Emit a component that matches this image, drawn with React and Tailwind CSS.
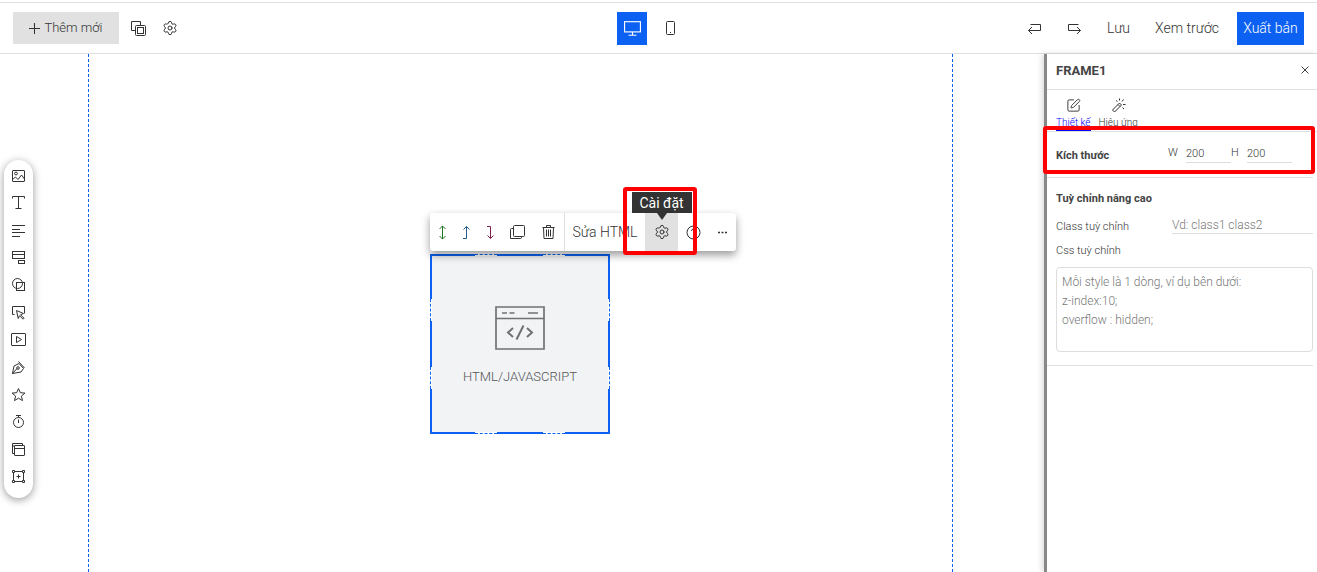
import { useState } from 'react'
import { Settings, SquarePen } from 'lucide-react'

// All thin icons share a 15px grid so the 1px strokes stay sharp
function Icon({ children, className = 'size-[15px]' }) {
  return (
    <svg viewBox="0 0 15 15" className={`${className} shrink-0 overflow-visible`} fill="none" stroke="currentColor" strokeWidth="1" aria-hidden="true">
      {children}
    </svg>
  )
}

const tools = [
  { name: 'Hình ảnh', icon: <><rect x="1.5" y="2.5" width="12" height="11" rx="0.5" /><circle cx="5" cy="5.5" r="1.4" /><path d="M1.5 11.5 4.5 9l2.500 2.500L10.500 7l3 4" /></> },
  { name: 'Văn bản', icon: <path d="M1.5 3.5v-2h12v2M7.5 1.5v12M4.5 13.5h6" /> },
  { name: 'Đoạn văn', icon: <path d="M1 2.5h13M1 6.5h8M1 9.5h13M1 13.5h8" /> },
  { name: 'Biểu mẫu', icon: <><rect x="1.5" y="1.5" width="12" height="7" /><path d="M1.5 4.5h12" /><rect x="7.5" y="10.5" width="6" height="3" /></> },
  { name: 'Hình khối', icon: <><circle cx="6.5" cy="6.5" r="5" /><rect x="5.5" y="5.5" width="8" height="8" /></> },
  { name: 'Nút bấm', icon: <><path d="M3.5 9.500h-2v-8h12v7" /><path d="m5.500 5.500 7 3-3 1.200 3.500 3.500-1 1-3.500-3.500-1.300 2.800z" /></> },
  { name: 'Video', icon: <><rect x="0.5" y="1.5" width="14" height="12" rx="0.5" /><path d="m5.500 4.500 5 3-5 3z" /></> },
  { name: 'Bút vẽ', icon: <><path d="M1.500 13.500 3 6l5-2.500L12.500 8.500 10 12z" /><path d="m7.500 1.500 6 6.500M1.500 13.500l4.500-5" /><circle cx="7" cy="8" r="1.300" /></> },
  { name: 'Biểu tượng', icon: <path d="m7.500 1.500 1.800 4.200 4.700.4-3.600 3 1.100 4.500-4-2.400-4 2.400 1.100-4.500-3.600-3 4.700-.4z" /> },
  { name: 'Đếm ngược', icon: <><circle cx="7.5" cy="8.5" r="5" /><path d="M5 1.500h5M7.500 5.500v3.500M7.500 1.500v2" /></> },
  { name: 'Popup', icon: <><path d="M3.500 11.500h-2v-10h10v2" /><rect x="3.5" y="3.5" width="10" height="10" rx="0.5" /><path d="M3.500 6.500h10M1.500 4h2" /></> },
  { name: 'Khung', icon: <><path d="M2.500 4v7M12.500 4v7M4 2.500h7M4 12.500h7M5.500 7.500h4M7.500 5.500v4" /><path d="M1.500 1.500h2v2h-2zM11.500 1.500h2v2h-2zM1.500 11.500h2v2h-2zM11.500 11.500h2v2h-2z" /></> },
]

function TopBar() {
  const [device, setDevice] = useState('desktop')

  return (
    <header className="mt-0.5 grid h-[52px] grid-cols-[1fr_auto_1fr] items-center border-y border-[#e0e0e0] px-[13px] text-sm">
      <div className="flex items-center">
        <button className="flex h-8 w-[106px] items-center justify-center gap-1 bg-[#e1e1e1] text-[13px]">
          <Icon className="size-[11px]"><path strokeWidth="1.400" d="M7.500 0v15M0 7.500h15" /></Icon>
          Thêm mới
        </button>
        <button aria-label="Nhân bản" className="ml-3">
          <Icon>
            <path d="M4.500 9.500h-4v-9h9v4" />
            <rect x="4.5" y="4.5" width="10" height="10" rx="1" />
            <rect x="6.5" y="6.5" width="6" height="6" />
          </Icon>
        </button>
        <button aria-label="Thiết lập" className="ml-4">
          <Settings className="size-4" strokeWidth={1.5} />
        </button>
      </div>

      <div className="flex items-center gap-2 pr-[15px]">
        <button
          aria-label="Máy tính"
          onClick={() => setDevice('desktop')}
          className={`flex h-[33px] w-[30px] items-center justify-center ${device === 'desktop' ? 'bg-[#0c61f2] text-white' : ''}`}
        >
          <Icon className="size-[17px]">
            <rect x="0.5" y="1.5" width="14" height="9" />
            <path d="M7.500 10.500v3M4 13.500h7" />
          </Icon>
        </button>
        <button
          aria-label="Điện thoại"
          onClick={() => setDevice('mobile')}
          className={`flex h-[33px] w-[30px] items-center justify-center ${device === 'mobile' ? 'bg-[#0c61f2] text-white' : ''}`}
        >
          <Icon>
            <rect x="3.5" y="0.5" width="8" height="13" rx="1" />
            <path d="M7 11.500h1" />
          </Icon>
        </button>
      </div>

      <div className="flex items-center justify-end">
        <button aria-label="Hoàn tác" className="mr-[25px]">
          <Icon><path d="M3.500 3.500h10v6H1.500M5 6 1.500 9.500 5 13" /></Icon>
        </button>
        <button aria-label="Làm lại" className="mr-[25px]">
          <Icon><path d="M11.500 3.500h-10v6h12M10 6l3.500 3.500L10 13" /></Icon>
        </button>
        <button className="mr-[25px]">Lưu</button>
        <button className="mr-[18px]">Xem trước</button>
        <button className="h-[33px] w-[67px] bg-[#0c61f2] text-white">Xuất bản</button>
      </div>
    </header>
  )
}

function ToolRail() {
  return (
    <nav aria-label="Công cụ" className="z-10 mt-[106px] ml-1 flex h-[338px] w-[29px] shrink-0 flex-col items-center justify-between rounded-full bg-white pt-2 pb-3.5 shadow-[0_2px_9px_rgba(0,0,0,0.4)]">
      {tools.map(tool => (
        <button key={tool.name} aria-label={tool.name}>
          <Icon>{tool.icon}</Icon>
        </button>
      ))}
    </nav>
  )
}

function WidgetToolbar() {
  const item = 'flex items-center justify-center'

  return (
    <div className="absolute -top-[43px] -left-0.5 flex h-[38px] w-[306px] rounded-[3px] bg-white text-sm text-[#333] shadow-[0_4px_9px_rgba(0,0,0,0.4)]">
      <button aria-label="Di chuyển" className={`${item} w-6 text-[#1f7a1f]`}>
        <Icon><path d="M7.500 1v13M4.500 4l3-3 3 3M4.500 11l3 3 3-3" /></Icon>
      </button>
      <button aria-label="Lên trên" className={`${item} w-6 text-[#245a8c]`}>
        <Icon><path d="M4 13.500h3.500v-12M4.500 4.500l3-3 3 3" /></Icon>
      </button>
      <button aria-label="Xuống dưới" className={`${item} w-6 text-[#7a2049]`}>
        <Icon><path d="M4 1.500h3.500v12M4.500 10.500l3 3 3-3" /></Icon>
      </button>
      <button aria-label="Sao chép" className={`${item} w-[31px]`}>
        <Icon>
          <rect x="3.5" y="0.5" width="11" height="11" rx="1" />
          <path d="M3.500 3.500h-2q-1 0-1 1v9h10q1 0 1-1v-1" />
        </Icon>
      </button>
      <button aria-label="Xoá" className={`${item} w-[31px]`}>
        <Icon>
          <path d="M1.500 2.500h12M5.500 2.500v-2h4v2M2.500 2.500l.5 11h9l.5-11M5.500 4.500v7M7.500 4.500v7M9.500 4.500v7" />
        </Icon>
      </button>
      <button className="w-[81px] border-l border-[#e0e0e0]">Sửa HTML</button>
      <div className="relative flex">
        <button aria-describedby="settings-tip" aria-label="Cài đặt phần tử" className={`${item} w-[33px] bg-[#e1e1e1]`}>
          <Settings className="size-4" strokeWidth={1.5} />
        </button>
        <div id="settings-tip" role="tooltip" className="absolute -top-[21px] left-1/2 flex h-[21px] w-[60px] -translate-x-1/2 items-center justify-center bg-[#333] font-normal text-white">
          Cài đặt
          <span className="absolute top-full border-x-[5px] border-t-[7px] border-x-transparent border-t-[#333]" />
        </div>
      </div>
      <button aria-label="Trợ giúp" className={`${item} w-[31px]`}>
        <Icon>
          <circle cx="7.5" cy="7.5" r="6.5" />
          <path d="M5.500 6q0-2 2-2t2 2q0 1-2 2v1M7.500 10.500v1" />
        </Icon>
      </button>
      <button aria-label="Thêm" className={`${item} w-[26px]`}>
        <Icon><path strokeWidth="1.500" d="M3 7.500h2M6.500 7.500h2M10 7.500h2" /></Icon>
      </button>
      {/* highlight around the settings button */}
      <div className="pointer-events-none absolute -top-[26px] left-[193px] h-[68px] w-[74px] rounded-[3px] border-4 border-[#fe0000]" />
    </div>
  )
}

function HtmlWidget() {
  return (
    <div className="absolute top-[200px] left-[341px] flex size-[180px] flex-col items-center border-2 border-[#0c61f2] bg-[#f1f3f5] pt-[50px] text-[#707070]">
      <svg viewBox="0 0 50 44" className="h-11 w-[50px]" fill="none" stroke="#707172" strokeWidth="2" aria-hidden="true">
        <path strokeWidth="1.700" d="M1 1h48v42H1zM1 12.500h48M7 7h5M14.500 7h5M33 7h10" />
        <path d="m18 22-5 4.500 5 4.500M32 22l5 4.500-5 4.500M28.500 19.500l-7 14" />
      </svg>
      <span className="mt-[18px] text-[13px] leading-[18px] font-light text-[#555]">HTML/JAVASCRIPT</span>

      {/* dashed breaks of the selection border */}
      <span className="absolute -top-0.5 left-[43px] h-0.5 w-[22px] border-t border-dashed border-[#0c61f2] bg-white" />
      <span className="absolute -top-0.5 right-[43px] h-0.5 w-[22px] border-t border-dashed border-[#0c61f2] bg-white" />
      <span className="absolute -bottom-0.5 left-[43px] h-0.5 w-[22px] border-b border-dashed border-[#0c61f2] bg-white" />
      <span className="absolute right-[43px] -bottom-0.5 h-0.5 w-[22px] border-b border-dashed border-[#0c61f2] bg-white" />
      <span className="absolute top-[43px] -left-0.5 h-[22px] w-0.5 border-l border-dashed border-[#0c61f2] bg-white" />
      <span className="absolute bottom-[43px] -left-0.5 h-[22px] w-0.5 border-l border-dashed border-[#0c61f2] bg-white" />
      <span className="absolute top-[43px] -right-0.5 h-[22px] w-0.5 border-r border-dashed border-[#0c61f2] bg-white" />
      <span className="absolute -right-0.5 bottom-[43px] h-[22px] w-0.5 border-r border-dashed border-[#0c61f2] bg-white" />

      <WidgetToolbar />
    </div>
  )
}

function PropertiesPanel() {
  const [width, setWidth] = useState('200')
  const [height, setHeight] = useState('200')

  return (
    <aside className="relative w-[273px] shrink-0 border-l-[3px] border-[#888] bg-white text-[11px] text-[#333] shadow-[-2px_0_6px_rgba(0,0,0,0.15)]">
      <div className="flex h-9 items-center justify-between border-b border-[#e0e0e0] pr-2 pb-0.5 pl-[9px]">
        <h2 className="text-[13px] font-bold text-[#444]">FRAME1</h2>
        <button aria-label="Đóng" className="pb-0.5">
          <Icon className="size-2"><path strokeWidth="1.800" d="m1 1 13 13M14 1 1 14" /></Icon>
        </button>
      </div>

      <div className="flex h-[42px] gap-2 border-b border-[#e0e0e0] pt-2 pl-[9px] text-[10px] leading-5">
        <button className="flex h-[33px] flex-col items-center border-b border-[#0000ff] text-[#0000ff]">
          <SquarePen className="size-[15px] shrink-0 text-[#333]" strokeWidth={1.5} />
          Thiết kế
        </button>
        <button className="flex h-[33px] flex-col items-center">
          <Icon>
            <path d="m1.500 12 7-7 2 2-7 7zM7 6.500l2 2M5 2.500l1.500 1M8.500.5v2M12.500 1.500 11 3.500M12 6.500h2.500M11.500 9.500l1.500 1.500" />
          </Icon>
          Hiệu ứng
        </button>
      </div>

      <div className="mr-1 flex h-[46px] items-center border-b border-[#e0e0e0] pb-0.5 pl-[9px]">
        <h3 className="w-28 pt-1.5 font-bold text-[#444]">Kích thước</h3>
        <label htmlFor="frame-w" className="w-[18px]">W</label>
        <input id="frame-w" value={width} onChange={e => setWidth(e.target.value)} className="h-[19px] w-[45px] border-b border-[#ddd] outline-none" />
        <label htmlFor="frame-h" className="w-4">H</label>
        <input id="frame-h" value={height} onChange={e => setHeight(e.target.value)} className="h-[19px] w-[45px] border-b border-[#ddd] outline-none" />
      </div>

      <div className="mr-1 border-b border-[#e0e0e0] pt-[13px] pb-[13px] pl-[9px]">
        <h3 className="leading-4 font-bold text-[#444]">Tuỳ chỉnh nâng cao</h3>
        <div className="mt-[7px] flex h-5 items-center">
          <label htmlFor="custom-class" className="w-[116px] pt-1.5">Class tuỳ chỉnh</label>
          <input id="custom-class" placeholder="Vd: class1 class2" className="h-5 min-w-0 flex-1 border-b border-[#ddd] pt-0.5 text-xs outline-none placeholder:text-[#777]" />
        </div>
        <label htmlFor="custom-css" className="mt-2 block leading-[18px]">Css tuỳ chỉnh</label>
        <textarea
          id="custom-css"
          placeholder={'Mỗi style là 1 dòng, ví dụ bên dưới:\nz-index:10;\noverflow : hidden;'}
          className="mt-[7px] block h-[85px] w-full resize-none rounded-sm border border-[#ddd] px-[5px] py-[5px] text-xs leading-[19px] outline-none placeholder:text-[#777]"
        />
      </div>

      {/* highlight around the size fields */}
      <div className="pointer-events-none absolute top-[72px] right-0.5 -left-1 h-12 rounded-[3px] border-4 border-[#fe0000]" />
    </aside>
  )
}

export default function App() {
  return (
    <div className="flex min-h-screen flex-col overflow-hidden bg-white font-['Roboto',sans-serif] font-light text-[#333]">
      <TopBar />
      <div className="flex flex-1">
        <ToolRail />
        <main className="relative mr-[91px] ml-[55px] flex-1 border-x border-dashed border-[#0c61f2]">
          <HtmlWidget />
        </main>
        <PropertiesPanel />
      </div>
    </div>
  )
}
